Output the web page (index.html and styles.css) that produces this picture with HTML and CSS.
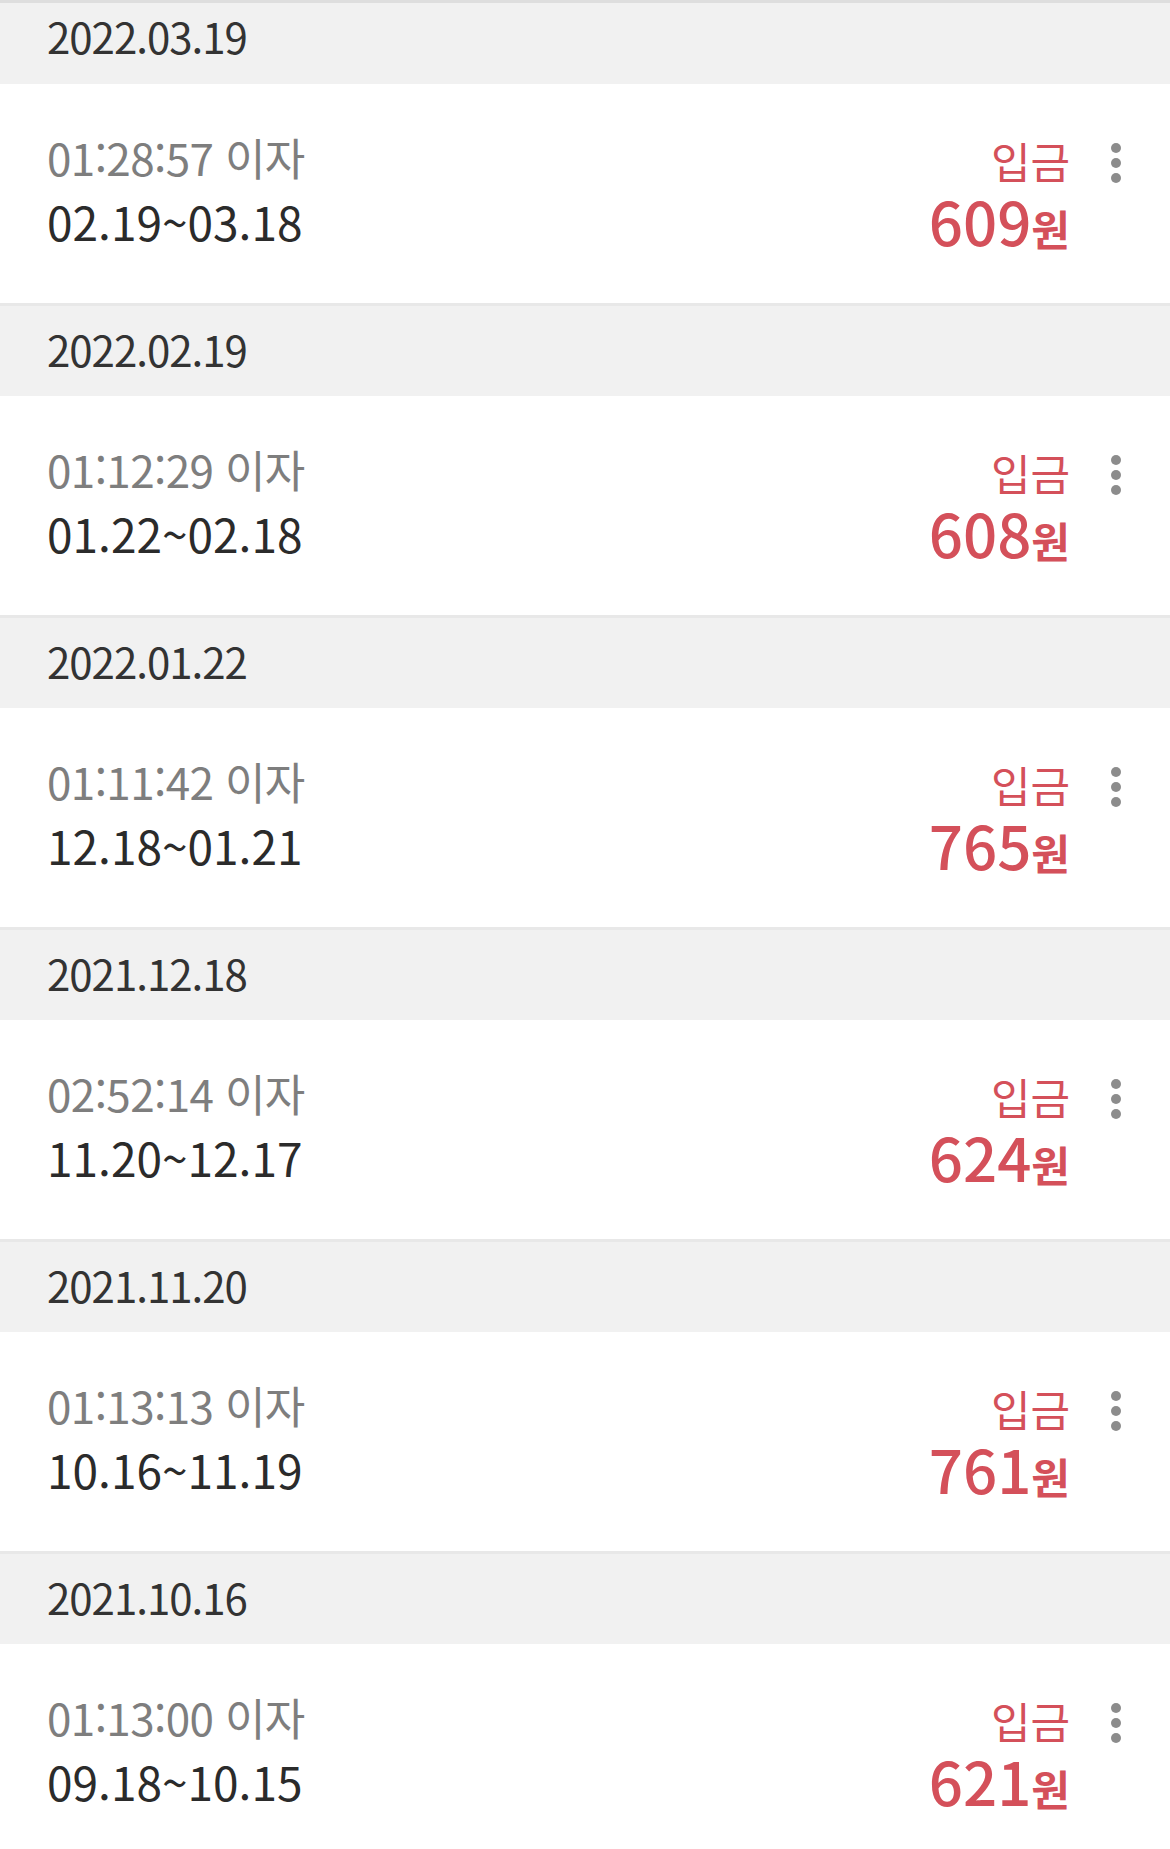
FILE: index.html
```html
<!DOCTYPE html>
<html lang="ko">
<head>
    <meta charset="UTF-8">
    <meta name="viewport" content="width=device-width, initial-scale=1.0">
    <title>이자 내역</title>
    <link rel="stylesheet" href="styles.css">
</head>
<body>
    <div class="list">
        <div class="day-head">2022.03.19</div>
        <div class="entry">
            <div class="info">
                <p class="time">01:28:57 이자</p>
                <p class="period">02.19~03.18</p>
            </div>
            <div class="money">
                <span class="kind">입금</span>
                <svg class="more" width="10" height="40" viewBox="0 0 10 40"><circle cx="5" cy="5" r="5"/><circle cx="5" cy="20" r="5"/><circle cx="5" cy="35" r="5"/></svg>
                <span class="amount">609<small>원</small></span>
            </div>
        </div>

        <div class="day-head">2022.02.19</div>
        <div class="entry">
            <div class="info">
                <p class="time">01:12:29 이자</p>
                <p class="period">01.22~02.18</p>
            </div>
            <div class="money">
                <span class="kind">입금</span>
                <svg class="more" width="10" height="40" viewBox="0 0 10 40"><circle cx="5" cy="5" r="5"/><circle cx="5" cy="20" r="5"/><circle cx="5" cy="35" r="5"/></svg>
                <span class="amount">608<small>원</small></span>
            </div>
        </div>

        <div class="day-head">2022.01.22</div>
        <div class="entry">
            <div class="info">
                <p class="time">01:11:42 이자</p>
                <p class="period">12.18~01.21</p>
            </div>
            <div class="money">
                <span class="kind">입금</span>
                <svg class="more" width="10" height="40" viewBox="0 0 10 40"><circle cx="5" cy="5" r="5"/><circle cx="5" cy="20" r="5"/><circle cx="5" cy="35" r="5"/></svg>
                <span class="amount">765<small>원</small></span>
            </div>
        </div>

        <div class="day-head">2021.12.18</div>
        <div class="entry">
            <div class="info">
                <p class="time">02:52:14 이자</p>
                <p class="period">11.20~12.17</p>
            </div>
            <div class="money">
                <span class="kind">입금</span>
                <svg class="more" width="10" height="40" viewBox="0 0 10 40"><circle cx="5" cy="5" r="5"/><circle cx="5" cy="20" r="5"/><circle cx="5" cy="35" r="5"/></svg>
                <span class="amount">624<small>원</small></span>
            </div>
        </div>

        <div class="day-head">2021.11.20</div>
        <div class="entry">
            <div class="info">
                <p class="time">01:13:13 이자</p>
                <p class="period">10.16~11.19</p>
            </div>
            <div class="money">
                <span class="kind">입금</span>
                <svg class="more" width="10" height="40" viewBox="0 0 10 40"><circle cx="5" cy="5" r="5"/><circle cx="5" cy="20" r="5"/><circle cx="5" cy="35" r="5"/></svg>
                <span class="amount">761<small>원</small></span>
            </div>
        </div>

        <div class="day-head">2021.10.16</div>
        <div class="entry">
            <div class="info">
                <p class="time">01:13:00 이자</p>
                <p class="period">09.18~10.15</p>
            </div>
            <div class="money">
                <span class="kind">입금</span>
                <svg class="more" width="10" height="40" viewBox="0 0 10 40"><circle cx="5" cy="5" r="5"/><circle cx="5" cy="20" r="5"/><circle cx="5" cy="35" r="5"/></svg>
                <span class="amount">621<small>원</small></span>
            </div>
        </div>
    </div>
</body>
</html>
```

FILE: styles.css
```css
body {
    margin: 0;
    background-color: #fff;
    font-family: "Noto Sans CJK KR", sans-serif;
    overflow: hidden;
}
.list {
    border-top: 3px solid #dedede;
}
.day-head {
    height: 90px;
    line-height: 86px;
    padding-left: 47px;
    background-color: #f1f1f1;
    font-size: 42px;
    letter-spacing: -1px;
    color: #333;
}
.day-head:first-child {
    height: 81px;
    line-height: 65px;
}
.entry {
    display: flex;
    align-items: center;
    height: 219px;
    padding: 0 49px 0 47px;
    border-bottom: 3px solid #e8e8e8;
}
.info {
    flex: 1;
    padding-bottom: 9px;
}
.info p {
    margin: 0;
    height: 64px;
    line-height: 64px;
    white-space: nowrap;
}
.info .time {
    font-size: 44px;
    letter-spacing: -0.6px;
    color: #7e7e7e;
}
.info .period {
    font-size: 46px;
    color: #2b2b2b;
}
.money {
    display: grid;
    grid-template-columns: auto 10px;
    grid-template-rows: 60px 60px;
    column-gap: 41px;
    margin-bottom: 8px;
    color: #d4505a;
}
.money .kind {
    grid-column: 1;
    grid-row: 1;
    text-align: right;
    font-size: 43px;
    line-height: 60px;
}
.money .more {
    grid-column: 2;
    grid-row: 1;
    align-self: center;
    margin-top: 6px;
    fill: #8c8c8c;
}
.money .amount {
    grid-column: 1;
    grid-row: 2;
    text-align: right;
    font-size: 60px;
    font-weight: 500;
    line-height: 60px;
    white-space: nowrap;
}
.money .amount small {
    font-size: 42px;
    font-weight: 700;
}
```
